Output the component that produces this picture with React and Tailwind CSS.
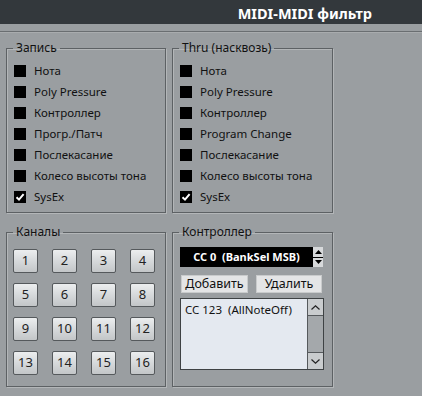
import React from "react";

const recordItems = [
  { label: "Нота", on: false },
  { label: "Poly Pressure", on: false },
  { label: "Контроллер", on: false },
  { label: "Прогр./Патч", on: false },
  { label: "Послекасание", on: false },
  { label: "Колесо высоты тона", on: false },
  { label: "SysEx", on: true },
];

const thruItems = [
  { label: "Нота", on: false },
  { label: "Poly Pressure", on: false },
  { label: "Контроллер", on: false },
  { label: "Program Change", on: false },
  { label: "Послекасание", on: false },
  { label: "Колесо высоты тона", on: false },
  { label: "SysEx", on: true },
];

function CheckBox({ on }) {
  return (
    <span className="w-[12px] h-[12px] bg-black flex items-center justify-center shrink-0">
      {on && (
        <svg width="10" height="10" viewBox="0 0 10 10">
          <path d="M1.5 5.2 4 7.6 8.6 2.2" fill="none" stroke="#fff" strokeWidth="2" />
        </svg>
      )}
    </span>
  );
}

function Group({ title, className, children }) {
  return (
    <fieldset className={`border border-[#5d6164] shadow-[1px_1px_0_#b3b6b8,inset_1px_1px_0_#b3b6b8] px-0 ${className}`}>
      <legend className="ml-[6px] px-[3px] leading-[16px] text-[12px] text-[#111]">{title}</legend>
      {children}
    </fieldset>
  );
}

function CheckList({ items }) {
  return (
    <div className="flex flex-col pt-[4px] pl-[7px]">
      {items.map((item) => (
        <div key={item.label} className="h-[21px] flex items-center gap-[8px] text-[#111] text-[11.5px]">
          <CheckBox on={item.on} />
          <span>{item.label}</span>
        </div>
      ))}
    </div>
  );
}

function Arrow({ dir, filled }) {
  if (filled) {
    return (
      <svg width="7" height="4" viewBox="0 0 7 4">
        <path d={dir === "up" ? "M0 4 3.5 0 7 4Z" : "M0 0 3.5 4 7 0Z"} fill="#000" />
      </svg>
    );
  }
  return (
    <svg width="9" height="5" viewBox="0 0 9 5">
      <path d={dir === "up" ? "M0.5 4.5 4.5 0.8 8.5 4.5" : "M0.5 0.5 4.5 4.2 8.5 0.5"} fill="none" stroke="#222" strokeWidth="1.2" />
    </svg>
  );
}

export default function App() {
  const channels = Array.from({ length: 16 }, (_, i) => i + 1);

  return (
    <div className="w-[422px] h-[396px] bg-[#9a9ea1] overflow-hidden text-[12px] font-['Noto_Sans',sans-serif]">
      {/* title bar */}
      <div className="h-[24px] bg-[#33383c] flex justify-end items-center pr-[50px] pt-[3px]">
        <span className="text-white font-bold text-[14.5px]">MIDI-MIDI фильтр</span>
      </div>
      <div className="h-[7px]" />
      <div className="h-[2px] border-t border-[#6a6e71] border-b border-b-[#a9acae]" />

      <div className="grid grid-cols-[160px_161px] gap-x-[6px] gap-y-[11px] pl-[6px] pt-[7px]">
        <Group title="Запись" className="h-[173px]">
          <CheckList items={recordItems} />
        </Group>
        <Group title="Thru (насквозь)" className="h-[173px]">
          <CheckList items={thruItems} />
        </Group>

        <Group title="Каналы" className="h-[163px]">
          <div className="grid grid-cols-[25px_25px_25px_25px] gap-x-[14px] gap-y-[10px] pl-[6px] pt-[9px]">
            {channels.map((n) => (
              <button
                key={n}
                className="w-[25px] h-[24px] rounded-[2px] border border-[#55595c] bg-gradient-to-b from-[#eceeef] via-[#d6d9db] to-[#c3c6c8] text-[13px] text-[#222] flex items-center justify-center"
              >
                {n}
              </button>
            ))}
          </div>
        </Group>

        <Group title="Контроллер" className="h-[163px]">
          <div className="flex flex-col pl-[7px] pt-[7px]">
            <div className="flex h-[20px]">
              <div className="w-[133px] bg-black text-white font-bold text-[11px] flex items-center justify-center">
                CC 0&nbsp;&nbsp;(BankSel MSB)
              </div>
              <div className="w-[10px] flex flex-col gap-[1px] bg-black">
                <div className="flex-1 bg-[#d7d9db] flex items-center justify-center">
                  <Arrow dir="up" filled />
                </div>
                <div className="flex-1 bg-[#d7d9db] flex items-center justify-center">
                  <Arrow dir="down" filled />
                </div>
              </div>
            </div>

            <div className="flex gap-[8px] mt-[8px] pl-[1px]">
              <button className="w-[67px] h-[18px] bg-[#e4e5e6] border border-[#c9cbcc] text-[12.5px] text-[#111] flex items-center justify-center">
                Добавить
              </button>
              <button className="w-[66px] h-[18px] bg-[#e4e5e6] border border-[#c9cbcc] text-[12.5px] text-[#111] flex items-center justify-center">
                Удалить
              </button>
            </div>

            <div className="mt-[5px] w-[144px] h-[72px] border border-[#3e4244] bg-[#e4e9f0] flex">
              <div className="flex-1 pl-[4px] pt-[3px] text-[#111] text-[11.5px] leading-[16px]">CC 123&nbsp;&nbsp;(AllNoteOff)</div>
              <div className="w-[16px] flex flex-col bg-[#a4a8ab] border-l border-[#55595c]">
                <div className="h-[17px] bg-[#c9ccce] border-b border-[#55595c] flex items-center justify-center">
                  <Arrow dir="up" />
                </div>
                <div className="flex-1" />
                <div className="h-[17px] bg-[#c9ccce] border-t border-[#55595c] flex items-center justify-center">
                  <Arrow dir="down" />
                </div>
              </div>
            </div>
          </div>
        </Group>
      </div>
    </div>
  );
}
